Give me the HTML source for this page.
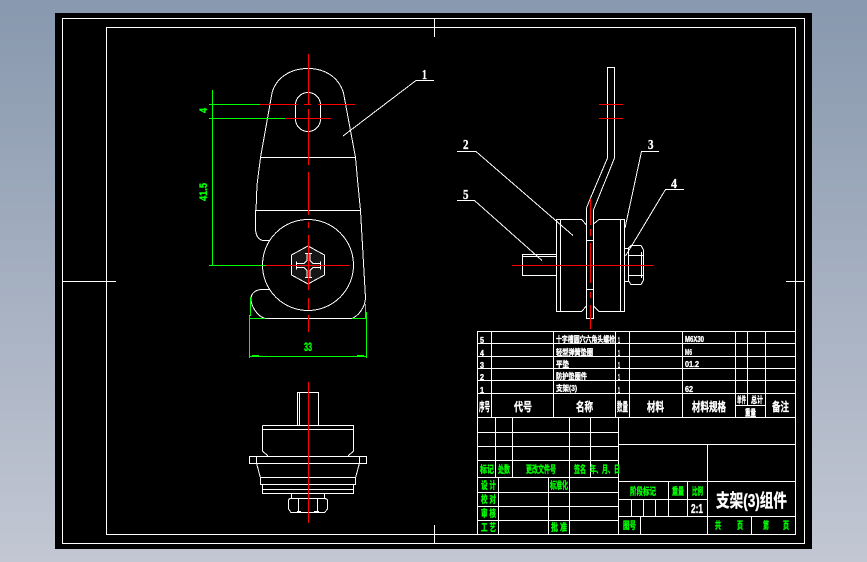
<!DOCTYPE html>
<html><head><meta charset="utf-8">
<style>
html,body{margin:0;padding:0;width:867px;height:562px;overflow:hidden;background:linear-gradient(180deg,#8898ae 0%,#c2c7d3 100%)}
svg{position:absolute;left:0;top:0}
text{font-family:"Liberation Sans","Noto Sans CJK SC",sans-serif;font-weight:bold}
.w{fill:#fff;stroke:#fff;stroke-width:.35}.g{fill:#0f0;stroke:#0f0;stroke-width:.35}
.c text{font-family:"Liberation Serif","Noto Sans CJK SC",serif}
</style></head>
<body>
<svg width="867" height="562" viewBox="0 0 867 562" xmlns="http://www.w3.org/2000/svg">
<rect x="55" y="13" width="757" height="536" fill="#000"/>
<g fill="none" stroke="#fff" stroke-width="1" shape-rendering="crispEdges">
<!-- frames -->
<rect x="62.5" y="18.5" width="742" height="525"/>
<rect x="106.5" y="27.5" width="689" height="507"/>
<path d="M62 281.5H116M786 281.5H805M434.5 18V37M434.5 525V543"/>
<!-- top view -->
<path d="M272 93C276 78 290 68.500 308 68.500C326 68.500 339 78 343.500 93L355.500 157.500L358 185L360.500 210.500M272 93L260.500 157.500L257 185L256 210.500"/>
<path d="M260 157.500H356M255 210.500H361"/>
<rect x="295.500" y="92.500" width="25" height="39" rx="12.500"/>
<path d="M255.500 210.500V228C255.500 236 259 240.500 264 240.500H270"/>
<path d="M360.500 210.500L365.500 298C365 308 358 316 352 318.500H265C257 316 251 306 251 299C251 293 256 289.500 262 289.500H270"/>
<circle cx="308" cy="265" r="45.500"/>
<path d="M308 246L324.500 255V275L308 284L291.500 275V255Z" fill="#151515"/>
<path d="M305 253.500H312M307 254V260.500L304 263.500H297M296.500 261.500V269.500M297 267.500H304L307 270.500V277.500M305 277.500H312M310 277.500V270.500L313 267.500H320M320.500 261.500V269.500M320 263.500H313L310 260.500V254"/>
<!-- bottom view -->
<path d="M297.500 425V392.500H318.500V425M299.500 392.500V425"/>
<path d="M262.500 425.500H353.500V451L348 456M262.500 425.500V451L268 456M262.500 429.500H353.500"/>
<rect x="249.500" y="456.500" width="117" height="7"/>
<path d="M256.500 456V463L260.500 478M359.500 456V463L355.500 478M256 456.500H360"/>
<rect x="260.500" y="477.500" width="95" height="7"/>
<rect x="262.500" y="484.500" width="91" height="9"/>
<path d="M262.500 489.500H353.500"/>
<rect x="291.500" y="493.500" width="33" height="5"/>
<path d="M291 498.500H324C326 498.500 327.500 499 327.500 501V509L324.500 512.500H291L288.500 509V501C288.500 499 290 498.500 291 498.500ZM298.500 498V512M317.500 498V512M297 511.500H301M314 511.500H319"/>
<!-- side view -->
<path d="M607.500 158V67.500H614.500V158L593.500 210V318.500H586.500V208L590.500 198L607.500 158"/>
<path d="M586 240.500H594M586 289.500H594"/>
<path d="M586.500 225L581.500 219.500H556.500V311.500H581.500L586.500 306M560.500 219.500V311.500"/>
<path d="M593.500 224L599 219.500H624.500V311.500H599L593.500 306M620.500 219.500V311.500"/>
<rect x="522.500" y="254.500" width="34" height="21"/>
<path d="M522 256.500H556"/>
<rect x="624.500" y="248.500" width="4" height="33"/>
<path d="M628.500 248L631 245.500H641L643.500 250V280L641 284.500H631L628.500 281V248ZM629 255.500H643M629 275.500H643M641.500 252V278"/>
<!-- leaders -->
<path d="M416 80.500H434M416 80.500L343 136"/>
<path d="M457 151.500H476L573 235.500"/>
<path d="M659 151.500H641.500L625 228"/>
<path d="M684 189.500H665.500L625.500 256"/>
<path d="M457 200.500H474.500L542 260.500"/>
<!-- parts list table -->
<path d="M477 331.500H796M477 343.500H796M477 356.500H796M477 368.500H796M477 380.500H796M477 393.500H796M477 417.500H796M735 405.500H766"/>
<path d="M477.500 331V535M491.500 331V417M553.500 331V417M615.500 331V417M629.500 331V417M682.500 331V417M735.500 331V417M747.500 331V405M765.500 331V417"/>
<path d="M477 432.500H618M477 446.500H618M477 460.500H618M477 477.500H618M477 492.500H618M477 506.500H618M477 520.500H618"/>
<path d="M495.500 417V477M512.500 417V477M569.500 417V477M590.500 417V477M618.500 417V534"/>
<path d="M498.500 477V534M548.500 477V534M569.500 477V534"/>
<path d="M618 444.500H796M618 481.500H796M618 499.500H707M618 516.500H796"/>
<path d="M707.500 444V534M668.500 481V516M687.500 481V516M631.500 499V516M643.500 499V516M655.500 499V516M640.500 516V534M751.500 516V534"/>
</g>
<!-- green dims -->
<g fill="none" stroke="#0f0" stroke-width="1" shape-rendering="crispEdges">
<path d="M212.500 90V265M209 104.500H260M209 118.500H285M209 265.500H266"/>
<path d="M249.500 315V358M366.500 312V358M249 356.500H367M249 318.500H265M352 318.500H367M250.500 297V316M365.500 304V318"/>
<path d="M212.500 95V98M212.500 122V127M212.500 258V264M252 355.500H259M357 355.500H364"/>
</g>
<!-- red centre lines -->
<g fill="none" stroke="#f00" stroke-width="1" shape-rendering="crispEdges">
<path d="M308.500 54V105M308.500 109V165M308.500 172V215M308.500 222V228M308.500 235V290M308.500 298V310M308.500 315V332"/>
<path d="M260 104.500H297M304 104.500H311M318 104.500H355M285 118.500H331M266 265.500H350"/>
<path d="M308.500 382V523"/>
<path d="M599 104.500H623M599 118.500H623"/>
<path d="M590.500 199V225M590.500 229V236M590.500 243V283M590.500 292V298M590.500 305V329M512 265.500H654"/>
</g>
<!-- labels -->
<g class="w c" font-size="14">
<text x="422" y="79" textLength="5" lengthAdjust="spacingAndGlyphs">1</text>
<text x="463" y="149" textLength="5.500" lengthAdjust="spacingAndGlyphs">2</text>
<text x="648" y="149" textLength="5.500" lengthAdjust="spacingAndGlyphs">3</text>
<text x="671" y="188" textLength="6" lengthAdjust="spacingAndGlyphs">4</text>
<text x="463" y="199" textLength="5.500" lengthAdjust="spacingAndGlyphs">5</text>
</g>
<g class="g" font-size="11">
<text transform="translate(207,113) rotate(-90)" textLength="5" lengthAdjust="spacingAndGlyphs">4</text>
<text transform="translate(207,201) rotate(-90)" textLength="18" lengthAdjust="spacingAndGlyphs">41.5</text>
<text x="304" y="351" font-size="12" textLength="8" lengthAdjust="spacingAndGlyphs">33</text>
</g>
<!-- parts rows -->
<g class="w" font-size="8">
<text x="480" y="343" textLength="4" lengthAdjust="spacingAndGlyphs">5</text>
<text x="480" y="356" textLength="4" lengthAdjust="spacingAndGlyphs">4</text>
<text x="480" y="368" textLength="4" lengthAdjust="spacingAndGlyphs">3</text>
<text x="480" y="380" textLength="4" lengthAdjust="spacingAndGlyphs">2</text>
<text x="480" y="393" textLength="4" lengthAdjust="spacingAndGlyphs">1</text>
<text x="556" y="342" textLength="59" lengthAdjust="spacingAndGlyphs">十字槽圆穴六角头螺栓</text>
<text x="556" y="355" textLength="37" lengthAdjust="spacingAndGlyphs">轻型弹簧垫圈</text>
<text x="556" y="367" textLength="13" lengthAdjust="spacingAndGlyphs">平垫</text>
<text x="556" y="379" textLength="31" lengthAdjust="spacingAndGlyphs">防护垫圈件</text>
<text x="556" y="391" textLength="21" lengthAdjust="spacingAndGlyphs">支架(3)</text>
<text x="618" y="343" textLength="2" lengthAdjust="spacingAndGlyphs">1</text>
<text x="618" y="356" textLength="2" lengthAdjust="spacingAndGlyphs">1</text>
<text x="618" y="368" textLength="2" lengthAdjust="spacingAndGlyphs">1</text>
<text x="618" y="380" textLength="2" lengthAdjust="spacingAndGlyphs">1</text>
<text x="618" y="393" textLength="2" lengthAdjust="spacingAndGlyphs">1</text>
<text x="685" y="342" textLength="19" lengthAdjust="spacingAndGlyphs">M6X30</text>
<text x="685" y="355" textLength="7" lengthAdjust="spacingAndGlyphs">M6</text>
<text x="685" y="367" textLength="14" lengthAdjust="spacingAndGlyphs">01.2</text>
<text x="685" y="392" textLength="8" lengthAdjust="spacingAndGlyphs">62</text>
</g>
<g class="w" font-size="12">
<text x="479" y="411" textLength="11" lengthAdjust="spacingAndGlyphs">序号</text>
<text x="514" y="411" textLength="18" lengthAdjust="spacingAndGlyphs">代号</text>
<text x="576" y="411" textLength="17" lengthAdjust="spacingAndGlyphs">名称</text>
<text x="617" y="411" textLength="11" lengthAdjust="spacingAndGlyphs">数量</text>
<text x="647" y="411" textLength="17" lengthAdjust="spacingAndGlyphs">材料</text>
<text x="692" y="411" textLength="34" lengthAdjust="spacingAndGlyphs">材料规格</text>
<text x="772" y="411" textLength="17" lengthAdjust="spacingAndGlyphs">备注</text>
</g>
<g class="w" font-size="9">
<text x="737" y="403" textLength="9" lengthAdjust="spacingAndGlyphs">单件</text>
<text x="751" y="403" textLength="12" lengthAdjust="spacingAndGlyphs">总计</text>
<text x="745" y="416" textLength="11" lengthAdjust="spacingAndGlyphs">重量</text>
<text x="691" y="513" font-size="13" textLength="12" lengthAdjust="spacingAndGlyphs">2:1</text>
</g>
<text class="w" x="716" y="507" font-size="18" textLength="71" lengthAdjust="spacingAndGlyphs">支架(3)组件</text>
<!-- green title block text -->
<g class="g" font-size="10">
<text x="480" y="473" textLength="14" lengthAdjust="spacingAndGlyphs">标记</text>
<text x="498" y="473" textLength="12" lengthAdjust="spacingAndGlyphs">处数</text>
<text x="526" y="473" textLength="30" lengthAdjust="spacingAndGlyphs">更改文件号</text>
<text x="574" y="473" textLength="12" lengthAdjust="spacingAndGlyphs">签名</text>
<text x="590" y="473" textLength="30" lengthAdjust="spacingAndGlyphs">年、月、日</text>
<text x="481" y="489" textLength="15" lengthAdjust="spacingAndGlyphs">设 计</text>
<text x="481" y="503" textLength="15" lengthAdjust="spacingAndGlyphs">校 对</text>
<text x="481" y="517" textLength="15" lengthAdjust="spacingAndGlyphs">审 核</text>
<text x="481" y="531" textLength="15" lengthAdjust="spacingAndGlyphs">工 艺</text>
<text x="550" y="489" textLength="18" lengthAdjust="spacingAndGlyphs">标准化</text>
<text x="551" y="531" textLength="16" lengthAdjust="spacingAndGlyphs">批 准</text>
<text x="630" y="495" textLength="26" lengthAdjust="spacingAndGlyphs">阶段标记</text>
<text x="672" y="495" textLength="12" lengthAdjust="spacingAndGlyphs">重量</text>
<text x="692" y="495" textLength="11" lengthAdjust="spacingAndGlyphs">比例</text>
<text x="623" y="529" textLength="13" lengthAdjust="spacingAndGlyphs">图号</text>
<text x="715" y="529" textLength="6" lengthAdjust="spacingAndGlyphs">共</text>
<text x="737" y="529" textLength="6" lengthAdjust="spacingAndGlyphs">页</text>
<text x="763" y="529" textLength="6" lengthAdjust="spacingAndGlyphs">第</text>
<text x="783" y="529" textLength="6" lengthAdjust="spacingAndGlyphs">页</text>
</g>
</svg>
</body></html>
